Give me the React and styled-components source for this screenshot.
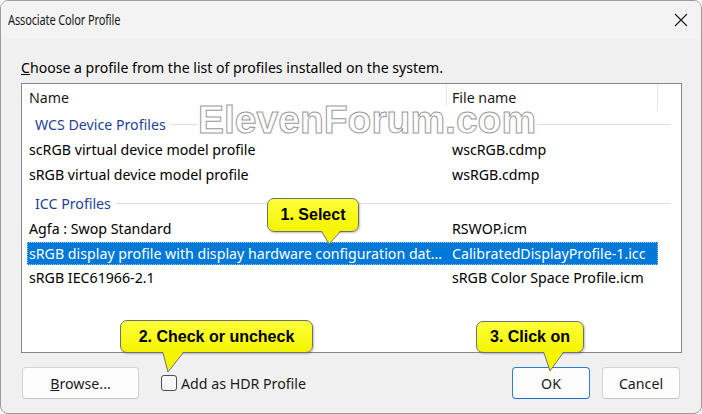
import React from "react";
import styled, { createGlobalStyle } from "styled-components";

const UI_FONT = `"Noto Sans", "Open Sans", sans-serif`;
const FS = "14.2px";

const Global = createGlobalStyle`
  html, body { margin: 0; padding: 0; background: #ffffff; }
  body { font-family: ${UI_FONT}; }
  * { box-sizing: border-box; }
`;

const Window = styled.div`
  position: relative;
  width: 702px;
  height: 414px;
  border: 1px solid #9b9b9b;
  border-radius: 8px;
  background: #f0f0f0;
  display: flex;
  flex-direction: column;
  overflow: hidden;
  font-family: ${UI_FONT};
  color: #000;
`;

const TitleBar = styled.div`
  flex: none;
  height: 38px;
  display: flex;
  align-items: center;
  justify-content: space-between;
  padding: 0 13px 0 7px;
  background: #f3f3f3;
`;

const Title = styled.div`
  font-size: 13.5px;
  color: #1a1a1a;
  letter-spacing: -0.2px;
  transform: scaleX(0.82);
  transform-origin: left center;
  white-space: nowrap;
`;

const CloseIcon = styled.svg`
  width: 14px;
  height: 14px;
  display: block;
`;

const Content = styled.div`
  display: flex;
  flex-direction: column;
  padding: 0 19px 0 20px;
`;

const Instruction = styled.div`
  margin-top: 20px;
  height: 18px;
  line-height: 18px;
  font-size: 14.1px;
  white-space: nowrap;
`;

const ListBox = styled.div`
  margin-top: 6px;
  height: 270px;
  border: 1px solid #828790;
  background: #ffffff;
  display: flex;
  flex-direction: column;
`;

const Columns = styled.div`
  display: grid;
  grid-template-columns: 420px 211px;
  margin-left: 5px;
  width: 631px;
  height: ${(p) => p.$h}px;
  align-items: center;
  font-size: ${FS};
  background: ${(p) => (p.$selected ? "#0078d7" : "transparent")};
  color: ${(p) => (p.$selected ? "#ffffff" : "#000000")};
  outline: ${(p) => (p.$selected ? "1px dotted #9cc8ee" : "none")};
  outline-offset: -1px;
  margin-top: ${(p) => p.$mt || 0}px;
`;

const HeadCell = styled.div`
  height: 100%;
  display: flex;
  align-items: center;
  padding-left: ${(p) => p.$pl}px;
  border-right: 1px solid #e5e5e5;
  color: #1a1a1a;
`;

const Cell = styled.div`
  padding-left: ${(p) => p.$pl}px;
  padding-right: 5px;
  white-space: nowrap;
  overflow: hidden;
  text-overflow: ellipsis;
`;

const Group = styled.div`
  display: flex;
  align-items: center;
  height: 26px;
  margin-top: ${(p) => p.$mt || 0}px;
  padding: 0 11px 0 13px;
  font-size: ${FS};
`;

const GroupLabel = styled.span`
  color: #1f3f99;
  white-space: nowrap;
`;

const GroupLine = styled.div`
  flex: 1;
  height: 1px;
  margin-left: 5px;
  background: #d8dce4;
`;

const Footer = styled.div`
  margin-top: 14px;
  height: 32px;
  display: flex;
  align-items: center;
  padding: 0 2px 0 1px;
`;

const Button = styled.div`
  width: ${(p) => p.$w}px;
  height: 32px;
  display: flex;
  align-items: center;
  justify-content: center;
  border: 1px solid ${(p) => (p.$primary ? "#2d7fd2" : "#d3d3d3")};
  border-bottom-color: ${(p) => (p.$primary ? "#1b6cc0" : "#c4c4c4")};
  border-radius: 4px;
  background: #fdfdfd;
  font-size: ${FS};
  color: #1a1a1a;
  margin-left: ${(p) => p.$ml || 0}px;
`;

const CheckRow = styled.label`
  display: flex;
  align-items: center;
  margin-left: 22px;
  font-size: ${FS};
  color: #1a1a1a;
`;

const CheckBox = styled.span`
  width: 16px;
  height: 16px;
  border: 1px solid #4d4d4d;
  border-radius: 3px;
  background: #f7f7f7;
  margin-right: 4px;
`;

const Spacer = styled.div`
  flex: 1;
`;

const Callout = styled.div`
  position: absolute;
  left: ${(p) => p.$x - 1}px;
  top: ${(p) => p.$y - 1}px;
  width: ${(p) => p.$w}px;
  height: ${(p) => p.$h}px;
  display: flex;
  align-items: center;
  justify-content: center;
  background: linear-gradient(#ffff3a, #f4f400);
  border: 1px solid #707070;
  border-radius: 7px;
  box-shadow: 1px 1px 2px rgba(0, 0, 0, 0.25);
  font-family: "Liberation Sans", Arial, sans-serif;
  font-weight: bold;
  font-size: 16px;
  color: #000;
  white-space: nowrap;
  z-index: 3;
`;

const Tail = styled.svg`
  position: absolute;
  left: -1px;
  top: ${(p) => p.$top}px;
  overflow: visible;
`;

const Watermark = styled.div`
  position: absolute;
  left: 196px;
  top: 105px;
  height: 28px;
  line-height: 28px;
  padding: 0 1px;
  background: #ffffff;
  font-family: "Liberation Sans", Arial, sans-serif;
  font-weight: bold;
  font-size: 39px;
  color: #ffffff;
  -webkit-text-stroke: 1px #9a9a9a;
  white-space: nowrap;
  z-index: 2;
`;

function Bubble({ x, y, w, h, tail, children }) {
  const [b1, b2, tx, ty] = tail;
  return (
    <Callout $x={x} $y={y} $w={w} $h={h}>
      {children}
      <Tail $top={h - 2} width={w} height={ty + 2}>
        <polygon points={`${b1},0 ${tx},${ty} ${b2},0`} fill="#f5f500" />
        <polyline
          points={`${b1},1 ${tx},${ty} ${b2},1`}
          fill="none"
          stroke="#707070"
          strokeWidth="1"
        />
      </Tail>
    </Callout>
  );
}

const rows = [
  { type: "group", label: "WCS Device Profiles", mt: 0 },
  { name: "scRGB virtual device model profile", file: "wscRGB.cdmp" },
  { name: "sRGB virtual device model profile", file: "wsRGB.cdmp" },
  { type: "group", label: "ICC Profiles", mt: 3 },
  { name: "Agfa : Swop Standard", file: "RSWOP.icm" },
  {
    name: "sRGB display profile with display hardware configuration data derived from calibration",
    file: "CalibratedDisplayProfile-1.icc",
    selected: true,
  },
  { name: "sRGB IEC61966-2.1", file: "sRGB Color Space Profile.icm" },
];

export default function App() {
  return (
    <>
      <Global />
      <Window>
        <TitleBar>
          <Title>Associate Color Profile</Title>
          <CloseIcon viewBox="0 0 14 14">
            <path d="M1 1 L13 13 M13 1 L1 13" stroke="#1a1a1a" strokeWidth="1.1" />
          </CloseIcon>
        </TitleBar>
        <Content>
          <Instruction>
            <u>C</u>hoose a profile from the list of profiles installed on the system.
          </Instruction>
          <ListBox>
            <Columns $h={27}>
              <HeadCell $pl={2}>Name</HeadCell>
              <HeadCell $pl={5}>File name</HeadCell>
            </Columns>
            {rows.map((r, i) =>
              r.type === "group" ? (
                <Group key={i} $mt={r.mt}>
                  <GroupLabel>{r.label}</GroupLabel>
                  <GroupLine />
                </Group>
              ) : (
                <Columns key={i} $h={r.selected ? 23 : 25} $mt={r.selected ? 1 : 0} $selected={r.selected}>
                  <Cell $pl={2}>{r.name}</Cell>
                  <Cell $pl={5}>{r.file}</Cell>
                </Columns>
              )
            )}
          </ListBox>
          <Footer>
            <Button $w={117}>
              <span>
                <u>B</u>rowse...
              </span>
            </Button>
            <CheckRow>
              <CheckBox />
              Add as HDR Profile
            </CheckRow>
            <Spacer />
            <Button $w={78} $primary>
              OK
            </Button>
            <Button $w={78} $ml={12}>
              Cancel
            </Button>
          </Footer>
        </Content>
        <Watermark>ElevenForum.com</Watermark>
        <Bubble x={267} y={198} w={92} h={34} tail={[55, 73, 62, 13]}>
          1. Select
        </Bubble>
        <Bubble x={120} y={320} w={193} h={33} tail={[43, 63, 48, 20]}>
          2. Check or uncheck
        </Bubble>
        <Bubble x={476} y={321} w={108} h={32} tail={[68, 87, 74, 19]}>
          3. Click on
        </Bubble>
      </Window>
    </>
  );
}
